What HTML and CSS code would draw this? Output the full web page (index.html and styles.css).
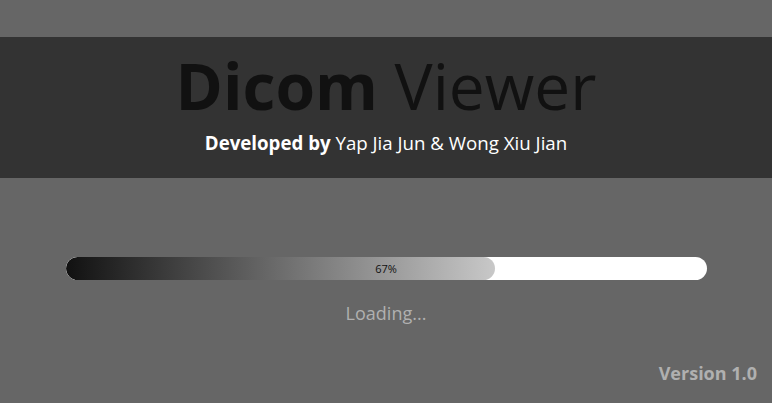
FILE: index.html
```html
<!DOCTYPE html>
<html>
<head>
<meta charset="utf-8">
<link rel="stylesheet" href="styles.css">
</head>
<body>
<div class="page">
  <header class="banner">
    <h1 class="title"><b>Dicom</b> Viewer</h1>
    <p class="credits"><b>Developed by</b> Yap Jia Jun &amp; Wong Xiu Jian</p>
  </header>
  <section class="loader">
    <div class="bar">
      <div class="fill" style="width:67%"></div>
      <span class="pct">67%</span>
    </div>
    <p class="loading">Loading...</p>
  </section>
  <footer class="version">Version 1.0</footer>
</div>
</body>
</html>
```
FILE: styles.css
```css
html, body {
  margin: 0;
  padding: 0;
  background: #666666;
  font-family: "Open Sans", "Noto Sans", sans-serif;
}
.page {
  width: 772px;
  height: 403px;
  display: flex;
  flex-direction: column;
  padding-top: 37px;
  box-sizing: border-box;
}
.banner {
  background: #333333;
  height: 141px;
  display: flex;
  flex-direction: column;
  align-items: center;
  box-sizing: border-box;
  padding-top: 12px;
}
.title {
  margin: 0;
  font-size: 64px;
  line-height: 74px;
  font-weight: 400;
  color: #111111;
}
.title b { font-weight: 700; }
.credits {
  margin: 7px 0 0;
  font-size: 18.7px;
  line-height: 26px;
  color: #ffffff;
}
.credits b { font-weight: 700; }
.loader {
  display: flex;
  flex-direction: column;
  align-items: center;
  padding-top: 79px;
}
.bar {
  position: relative;
  width: 641px;
  height: 23px;
  background: #ffffff;
  border-radius: 11.5px;
  overflow: hidden;
}
.fill {
  height: 100%;
  background: linear-gradient(to right, #111111, #c8c8c8);
  border-radius: 11.5px;
}
.pct {
  position: absolute;
  left: 0;
  right: 0;
  top: 0;
  text-align: center;
  font-size: 11px;
  line-height: 23px;
  color: #111111;
}
.loading {
  margin: 21px 0 0;
  font-size: 18px;
  line-height: 24px;
  color: #b0b0b0;
}
.version {
  margin-top: auto;
  margin-bottom: 18px;
  align-self: flex-end;
  padding-right: 15px;
  font-size: 18px;
  line-height: 24px;
  font-weight: 700;
  color: #b0b0b0;
}
```
